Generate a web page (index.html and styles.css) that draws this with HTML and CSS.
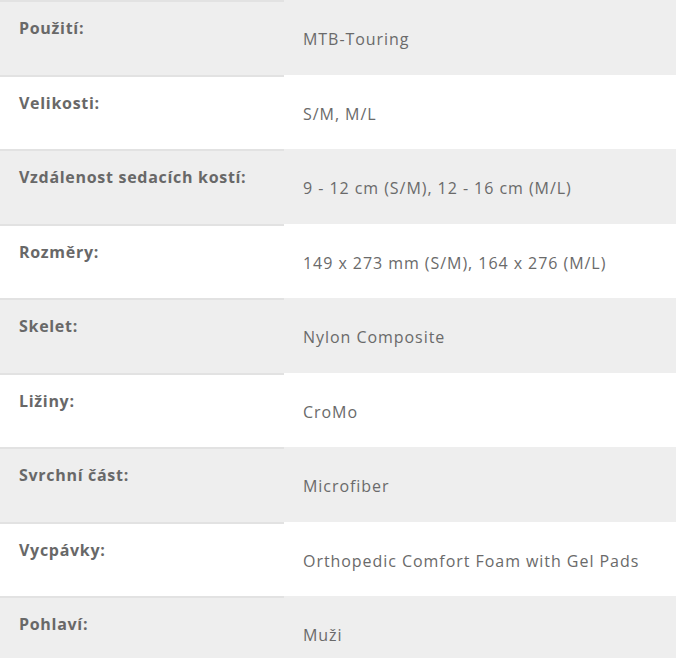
FILE: index.html
```html
<!DOCTYPE html>
<html lang="cs">
<head>
<meta charset="utf-8">
<link rel="stylesheet" href="styles.css">
</head>
<body>
<div class="specs">
  <div class="row odd"><div class="label">Použití:</div><div class="value">MTB-Touring</div></div>
  <div class="row"><div class="label">Velikosti:</div><div class="value">S/M, M/L</div></div>
  <div class="row odd"><div class="label">Vzdálenost sedacích kostí:</div><div class="value">9 - 12 cm (S/M), 12 - 16 cm (M/L)</div></div>
  <div class="row"><div class="label">Rozměry:</div><div class="value">149 x 273 mm (S/M), 164 x 276 (M/L)</div></div>
  <div class="row odd"><div class="label">Skelet:</div><div class="value">Nylon Composite</div></div>
  <div class="row"><div class="label">Ližiny:</div><div class="value">CroMo</div></div>
  <div class="row odd"><div class="label">Svrchní část:</div><div class="value">Microfiber</div></div>
  <div class="row"><div class="label">Vycpávky:</div><div class="value">Orthopedic Comfort Foam with Gel Pads</div></div>
  <div class="row odd"><div class="label">Pohlaví:</div><div class="value">Muži</div></div>
</div>
</body>
</html>
```
FILE: styles.css
```css
html, body {
  margin: 0;
  padding: 0;
  background: #ffffff;
}
body {
  font-family: "Open Sans", "Liberation Sans", sans-serif;
  color: #6a6a6a;
}
.specs {
  display: flex;
  flex-direction: column;
  width: 676px;
}
.row {
  display: grid;
  grid-template-columns: 284px 1fr;
  height: 74.5px;
  flex: none;
  background: #ffffff;
}
.row.odd {
  background: #eeeeee;
}
.label {
  border-top: 2px solid #e2e2e2;
  padding: 15px 0 0 19px;
  font-weight: 700;
  font-size: 16px;
  line-height: 22px;
  letter-spacing: 0.7px;
  color: #686868;
}
.value {
  display: flex;
  align-items: center;
  padding: 4px 0 0 19px;
  font-size: 16px;
  line-height: 22px;
  letter-spacing: 0.95px;
  color: #6a6a6a;
}
```
